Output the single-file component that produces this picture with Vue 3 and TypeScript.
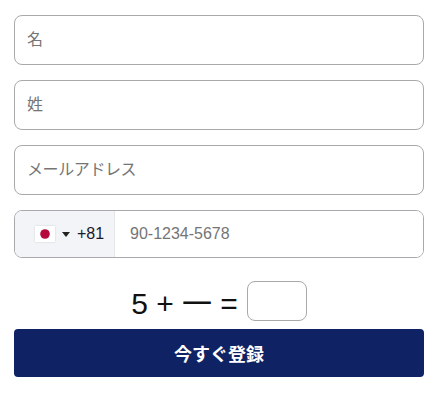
<script setup lang="ts">
const fields: string[] = ['名', '姓', 'メールアドレス']
</script>

<template>
  <form class="form" @submit.prevent>
    <input v-for="f in fields" :key="f" class="field" type="text" :placeholder="f" />
    <div class="phone">
      <div class="country">
        <svg class="flag" width="20" height="16" viewBox="0 0 20 16">
          <rect width="20" height="16" fill="#fff" />
          <circle cx="10" cy="8" r="4.8" fill="#b5083c" />
        </svg>
        <span class="caret"></span>
        <span class="dial">+81</span>
      </div>
      <input class="tel" type="tel" placeholder="90-1234-5678" />
    </div>
    <div class="captcha">
      <span class="eq">5 + 一 =</span>
      <input class="answer" type="text" />
    </div>
    <button class="submit" type="submit">今すぐ登録</button>
  </form>
</template>

<style scoped>
.form {
  width: 410px;
  padding: 15px 0 0 14px;
  display: flex;
  flex-direction: column;
  font-family: "Liberation Sans", "Noto Sans CJK JP", sans-serif;
}
.field {
  box-sizing: border-box;
  width: 410px;
  height: 50px;
  margin-bottom: 15px;
  padding: 0 12px;
  border: 1px solid #a9a9a9;
  border-radius: 8px;
  font: inherit;
  font-size: 16px;
  letter-spacing: -0.4px;
  outline: none;
}
.field::placeholder,
.tel::placeholder {
  color: #757575;
}
.phone {
  box-sizing: border-box;
  display: flex;
  width: 410px;
  height: 48px;
  border: 1px solid #a9a9ad;
  border-radius: 8px;
  overflow: hidden;
}
.country {
  display: flex;
  align-items: center;
  width: 100px;
  flex: none;
  padding-left: 20px;
  box-sizing: border-box;
  background: #f3f4f7;
  border-right: 1px solid #e6e7ea;
}
.flag {
  flex: none;
  box-shadow: 0 0 2px rgba(0, 0, 0, 0.15);
}
.caret {
  width: 0;
  height: 0;
  margin-left: 7px;
  border-left: 4px solid transparent;
  border-right: 4px solid transparent;
  border-top: 5px solid #222;
}
.dial {
  margin-left: 7px;
  font-size: 16px;
  color: #1a1a2e;
}
.tel {
  flex: 1;
  min-width: 0;
  border: none;
  padding: 0 15px;
  font: inherit;
  font-size: 16px;
  outline: none;
}
.captcha {
  display: flex;
  align-items: center;
  justify-content: center;
  gap: 9px;
  height: 40px;
  margin-top: 23px;
}
.eq {
  font-size: 30px;
  color: #111;
}
.answer {
  box-sizing: border-box;
  width: 60px;
  height: 40px;
  border: 1px solid #a9a9a9;
  border-radius: 8px;
  outline: none;
}
.submit {
  width: 410px;
  height: 48px;
  margin-top: 8px;
  border: none;
  border-radius: 4px;
  background: #0e2264;
  color: #fff;
  font: inherit;
  font-size: 18px;
  font-weight: 700;
}
</style>
